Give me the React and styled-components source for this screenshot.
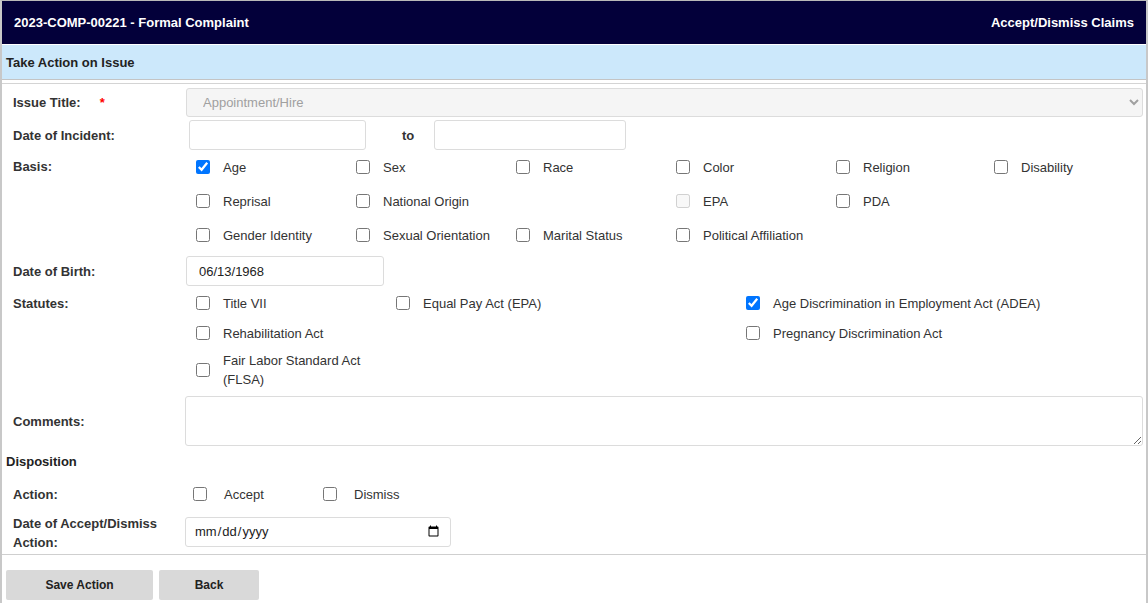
import React from "react";
import styled, { createGlobalStyle } from "styled-components";

const GlobalStyle = createGlobalStyle`
  body {
    margin: 0;
    background: #fff;
    font-family: "Liberation Sans", Arial, sans-serif;
    font-size: 13px;
    color: #333;
  }
`;

const Frame = styled.div`
  width: 1148px;
  box-sizing: border-box;
  border-top: 1px solid #b9b9b9;
  border-left: 2px solid #c8c8c8;
  border-right: 2px solid #c8c8c8;
  min-height: 603px;
`;

const TopBar = styled.header`
  height: 43px;
  background: #03003a;
  color: #fff;
  display: flex;
  justify-content: space-between;
  align-items: center;
  padding: 0 12px 0 12px;
  font-weight: bold;
  font-size: 13px;
`;

const Band = styled.div`
  height: 34px;
  background: #cce8fb;
  border-bottom: 1px solid #c4c4c4;
  display: flex;
  align-items: center;
  padding-left: 4px;
  font-weight: bold;
  font-size: 13px;
  color: #222;
  margin-top: 1px;
`;

const FormBox = styled.div`
  margin-top: 3px;
  border-top: 1px solid #d4d4d4;
  border-bottom: 1px solid #cfcfcf;
  padding: 4px 4px 2px 11px;
`;

const Row = styled.div`
  display: grid;
  grid-template-columns: 172px 1fr;
  align-items: ${(p) => (p.$top ? "start" : "center")};
  margin-top: ${(p) => p.$mt || 0}px;
  min-height: ${(p) => p.$h || 0}px;
`;

const Label = styled.label`
  font-weight: bold;
  color: #333;
  line-height: 19px;
  padding-top: ${(p) => p.$pt || 0}px;
`;

const Required = styled.span`
  color: #f00;
  margin-left: 19px;
`;

const Select = styled.select`
  width: 957px;
  height: 29px;
  margin-left: 1px;
  border: 1px solid #dcdcdc;
  border-radius: 3px;
  background: #f5f5f5;
  color: #a0a0a0;
  font-family: inherit;
  font-size: 13px;
  padding-left: 12px;
  opacity: 1;
`;

const TextInput = styled.input`
  box-sizing: border-box;
  width: ${(p) => p.$w}px;
  height: 30px;
  border: 1px solid #dcdcdc;
  border-radius: 3px;
  font-family: inherit;
  font-size: 13px;
  color: #222;
  padding: 0 12px;
  margin-left: ${(p) => p.$ml || 0}px;
`;

const DateRange = styled.div`
  display: flex;
  align-items: center;
`;

const ToText = styled.span`
  font-weight: bold;
  margin: 0 20px 0 36px;
`;

const CheckGrid = styled.div`
  display: grid;
  grid-template-columns: ${(p) => p.$cols};
  grid-template-rows: ${(p) => p.$rows || "none"};
  grid-auto-rows: ${(p) => p.$auto || "auto"};
  padding-left: ${(p) => p.$pl || 11}px;
  align-items: center;
`;

const CheckItem = styled.label`
  display: flex;
  align-items: center;
  color: #333;
  line-height: 19px;
`;

const Box = styled.input.attrs({ type: "checkbox" })`
  width: 14px;
  height: 14px;
  margin: 0 13px 0 0;
  flex-shrink: 0;
`;

const ItemText = styled.span`
  max-width: ${(p) => p.$max || 400}px;
`;

const TextArea = styled.textarea`
  box-sizing: border-box;
  width: 958px;
  height: 50px;
  border: 1px solid #dcdcdc;
  border-radius: 3px;
  font-family: inherit;
  resize: vertical;
`;

const Section = styled.div`
  font-weight: bold;
  color: #222;
  height: 30px;
  display: flex;
  align-items: center;
  margin-left: -7px;
`;

const ActionChecks = styled.div`
  display: flex;
  padding-left: 8px;
`;

const ActionItem = styled.label`
  display: flex;
  align-items: center;
  width: 130px;
  color: #333;
  input {
    margin-right: 17px;
  }
`;

const DateInput = styled.input.attrs({ type: "date" })`
  box-sizing: border-box;
  width: 266px;
  height: 30px;
  border: 1px solid #dcdcdc;
  border-radius: 3px;
  font-family: inherit;
  font-size: 13px;
  color: #222;
  padding: 0 8px;
`;

const Buttons = styled.div`
  display: flex;
  gap: 6px;
  padding: 15px 4px 0 4px;
`;

const Button = styled.button`
  width: ${(p) => p.$w}px;
  height: 30px;
  border: none;
  border-radius: 2px;
  background: #d9d9d9;
  font-family: inherit;
  font-weight: bold;
  font-size: 12px;
  color: #222;
`;

const basis = [
  ["Age", true],
  ["Sex"],
  ["Race"],
  ["Color"],
  ["Religion"],
  ["Disability"],
  ["Reprisal"],
  ["National Origin"],
  null,
  ["EPA", false, true],
  ["PDA"],
  null,
  ["Gender Identity"],
  ["Sexual Orientation"],
  ["Marital Status"],
  ["Political Affiliation"],
];

const statutes = [
  ["Title VII"],
  ["Equal Pay Act (EPA)"],
  ["Age Discrimination in Employment Act (ADEA)", true],
  ["Rehabilitation Act"],
  null,
  ["Pregnancy Discrimination Act"],
  ["Fair Labor Standard Act (FLSA)"],
];

function Check({ item, max }) {
  if (!item) return <span />;
  const [text, checked, disabled] = item;
  return (
    <CheckItem>
      <Box defaultChecked={!!checked} disabled={!!disabled} />
      <ItemText $max={max}>{text}</ItemText>
    </CheckItem>
  );
}

export default function App() {
  return (
    <Frame>
      <GlobalStyle />
      <TopBar>
        <span>2023-COMP-00221 - Formal Complaint</span>
        <span>Accept/Dismiss Claims</span>
      </TopBar>
      <Band>Take Action on Issue</Band>
      <FormBox>
        <Row>
          <Label>
            Issue Title:<Required>*</Required>
          </Label>
          <Select disabled defaultValue="hire">
            <option value="hire">Appointment/Hire</option>
          </Select>
        </Row>
        <Row $mt={3}>
          <Label>Date of Incident:</Label>
          <DateRange>
            <TextInput $w={177} $ml={4} />
            <ToText>to</ToText>
            <TextInput $w={192} />
          </DateRange>
        </Row>
        <Row $top>
          <Label $pt={7}>Basis:</Label>
          <CheckGrid $cols="160px 160px 160px 160px 158px 160px" $auto="34px">
            {basis.map((b, i) => (
              <Check key={i} item={b} />
            ))}
          </CheckGrid>
        </Row>
        <Row $mt={4}>
          <Label>Date of Birth:</Label>
          <TextInput $w={198} $ml={1} defaultValue="06/13/1968" />
        </Row>
        <Row $top $mt={2}>
          <Label $pt={6}>Statutes:</Label>
          <CheckGrid $cols="200px 350px 1fr" $rows="30px 30px 44px">
            {statutes.map((s, i) => (
              <Check key={i} item={s} max={i % 3 === 0 ? 150 : 400} />
            ))}
          </CheckGrid>
        </Row>
        <Row $mt={4}>
          <Label>Comments:</Label>
          <TextArea />
        </Row>
        <Section>Disposition</Section>
        <Row $h={34} $mt={1}>
          <Label>Action:</Label>
          <ActionChecks>
            <ActionItem>
              <Box />
              Accept
            </ActionItem>
            <ActionItem>
              <Box />
              Dismiss
            </ActionItem>
          </ActionChecks>
        </Row>
        <Row>
          <Label $pt={3}>
            Date of Accept/Dismiss
            <br />
            Action:
          </Label>
          <DateInput />
        </Row>
      </FormBox>
      <Buttons>
        <Button $w={147}>Save Action</Button>
        <Button $w={100}>Back</Button>
      </Buttons>
    </Frame>
  );
}
